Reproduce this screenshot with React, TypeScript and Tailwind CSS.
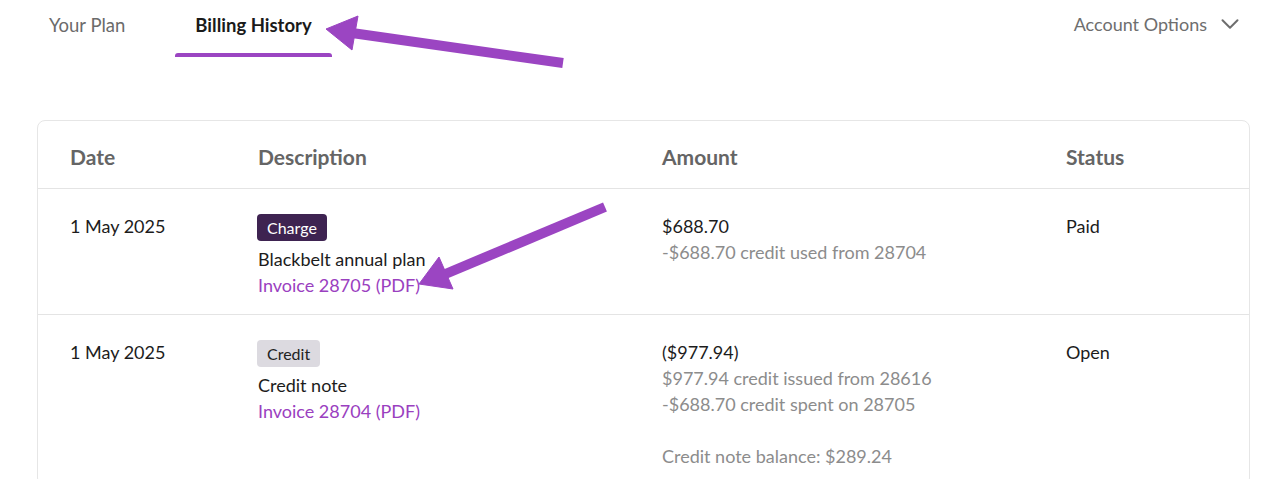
import { ChevronDown } from 'lucide-react'

const rows = [
  {
    date: '1 May 2025',
    kind: 'Charge',
    title: 'Blackbelt annual plan',
    invoice: 'Invoice 28705 (PDF)',
    amount: '$688.70',
    notes: ['-$688.70 credit used from 28704'],
    status: 'Paid',
  },
  {
    date: '1 May 2025',
    kind: 'Credit',
    title: 'Credit note',
    invoice: 'Invoice 28704 (PDF)',
    amount: '($977.94)',
    notes: ['$977.94 credit issued from 28616', '-$688.70 credit spent on 28705', '', 'Credit note balance: $289.24'],
    status: 'Open',
  },
]

function Arrows() {
  return (
    <svg className="pointer-events-none absolute inset-0" width="1280" height="479" viewBox="0 0 1280 479">
      <g fill="#9b45c2" stroke="#9b45c2">
        {/* arrow pointing at the active tab */}
        <line x1="563" y1="63" x2="352" y2="33" strokeWidth="10" />
        <polygon points="326,29 358,16 352,50" strokeWidth="1" strokeLinejoin="round" />
        {/* arrow pointing at the invoice link */}
        <line x1="605" y1="207" x2="443" y2="275" strokeWidth="10" />
        <polygon points="419,284 439,257 453,289" strokeWidth="1" strokeLinejoin="round" />
      </g>
    </svg>
  )
}

export default function App() {
  return (
    <div className="relative h-[479px] w-[1280px] overflow-hidden bg-white font-['Lato','Liberation_Sans',sans-serif] text-[#1c1c1c]">
      {/* Tabs */}
      <div className="flex items-start justify-between pr-[35px]">
        <div className="ml-[29px] flex gap-[30px]">
          <div className="flex flex-col">
            <span className="px-5 pt-[13px] pb-4 text-[18.5px] leading-6 text-[#6b6b6b]">Your Plan</span>
            <div className="h-1" />
          </div>
          <div className="flex flex-col">
            <span className="px-5 pt-[13px] pb-4 text-[18.5px] leading-6 font-bold text-[#1a1a1a]">Billing History</span>
            <div className="h-1 rounded-t-[3px] bg-[#9b45c2]" />
          </div>
        </div>
        <button className="mt-[9px] flex items-center gap-2 text-[18px] leading-6 text-[#6e6e6e]">
          Account Options
          <ChevronDown className="h-[30px] w-[30px]" strokeWidth={1.6} />
        </button>
      </div>

      {/* Billing table */}
      <div className="ml-[37px] mt-[63px] w-[1213px] rounded-lg border border-[#e6e6e6]">
        <div className="grid grid-cols-[188px_404px_404px_1fr] border-b border-[#e4e4e4] pl-[32px] pt-[24px] pb-[19px] text-[21px] leading-6 font-bold text-[#656565]">
          <div>Date</div>
          <div>Description</div>
          <div>Amount</div>
          <div>Status</div>
        </div>
        {rows.map((r, i) => (
          <div
            key={i}
            className={`grid grid-cols-[188px_404px_404px_1fr] pl-[32px] pt-6 pb-4 text-[18px] leading-[26px] ${i === 0 ? 'border-b border-[#e4e4e4]' : ''}`}
          >
            <div>{r.date}</div>
            <div className="flex flex-col items-start">
              <span
                className={`mt-[1px] mb-[5px] -ml-px flex h-[27px] items-center rounded-[4px] px-[10px] text-[16px] ${
                  r.kind === 'Charge' ? 'bg-[#3e2351] text-white' : 'bg-[#dcdae0] text-[#222]'
                }`}
              >
                {r.kind}
              </span>
              <span>{r.title}</span>
              <a className="text-[#9a40c0]">{r.invoice}</a>
            </div>
            <div className="flex flex-col">
              <span>{r.amount}</span>
              {r.notes.map((n, j) => (
                <span key={j} className="h-[26px] text-[#8c8c8c]">{n}</span>
              ))}
            </div>
            <div>{r.status}</div>
          </div>
        ))}
      </div>

      <Arrows />
    </div>
  )
}
